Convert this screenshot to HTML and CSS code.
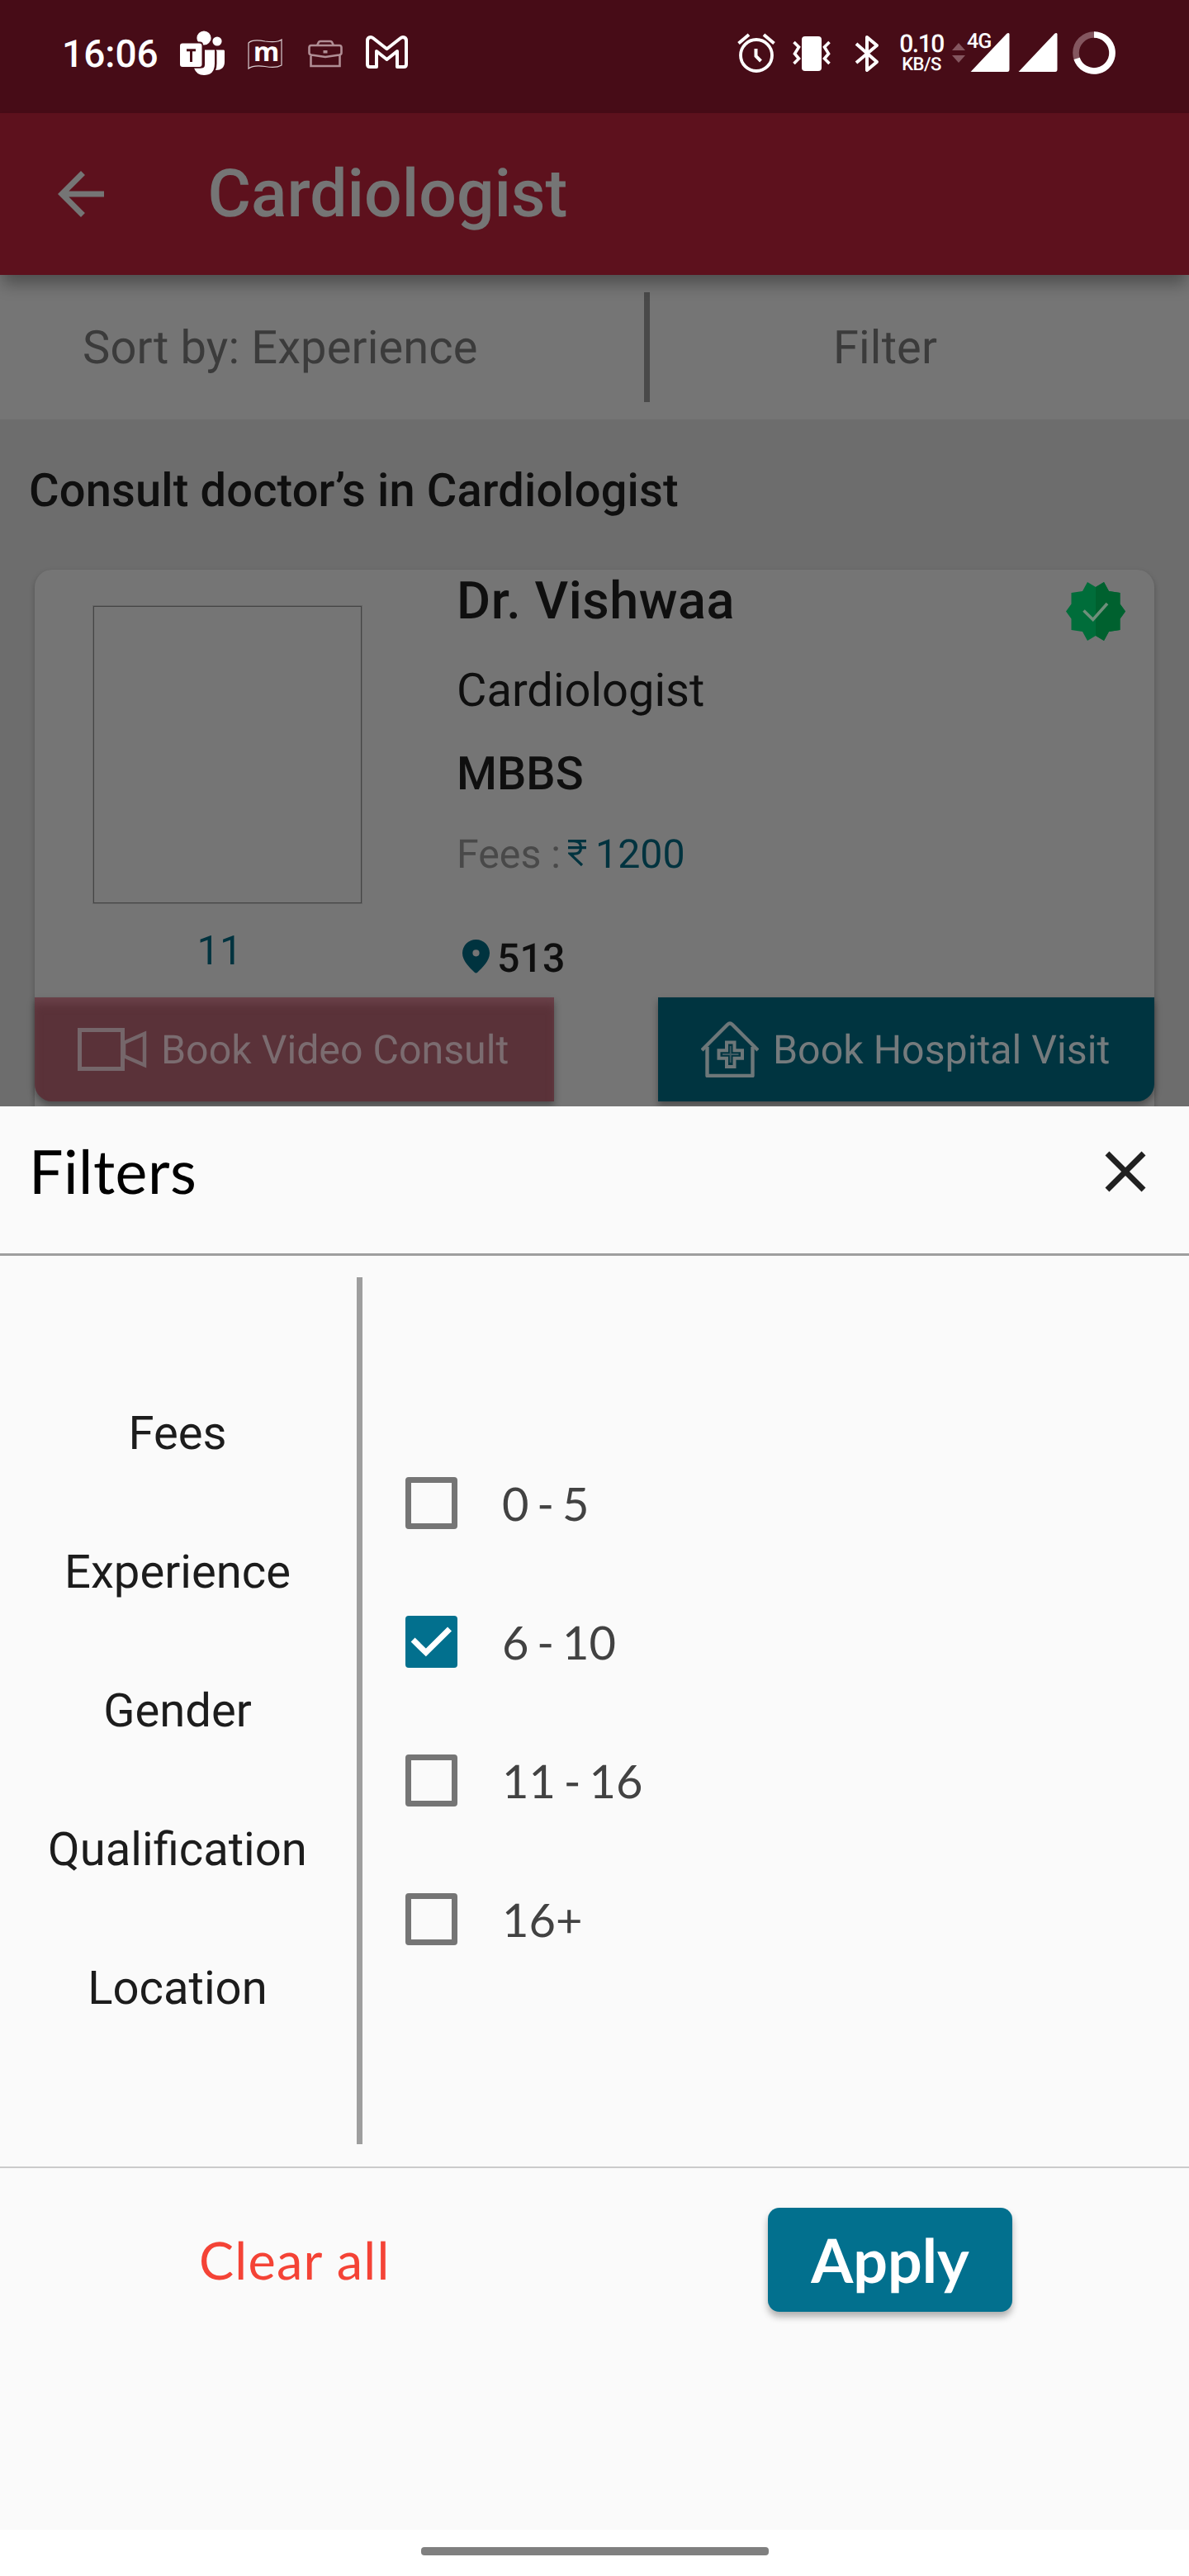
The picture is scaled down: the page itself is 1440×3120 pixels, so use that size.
FILE: index.html
```
<!DOCTYPE html>
<html lang="en">
<head>
<meta charset="utf-8">
<title>Cardiologist</title>
<link rel="stylesheet" href="styles.css">
</head>
<body>
<div class="screen">
  <header class="status">
    <span class="clock">16:06</span>
    <svg class="teams" width="56" height="56" viewBox="0 0 56 56"><g fill="#fff"><circle cx="30" cy="9" r="8.600"/><circle cx="46" cy="13" r="5.600"/><path d="M31 23.500h12V40q0 14-13 14-9 0-12-8.500h9q4 0 4-4z"/><path d="M44.500 23.500H54q1 0 1 1.500v13q0 10-11 10 1.500-3 1.500-8V25z"/><rect x="-1" y="13.500" width="30" height="32" rx="4" fill="#470c17"/><rect x="1" y="15.500" width="26.500" height="28.500" rx="3"/></g><path d="M9 23.700h11M14.500 23v15" stroke="#470c17" stroke-width="3" fill="none"/></svg>
    <svg class="flag" width="42" height="38" viewBox="0 0 42 38"><path d="M1 36V5q5-5 20-2 15 2 20-2v31q-7 4-20 1.500Q7 31.500 1 36z" fill="none" stroke="#d9cdd0" stroke-width="1.200"/></svg>
    <span class="flag-m">m</span>
    <svg class="case" width="42" height="34" viewBox="0 0 42 34"><g fill="none" stroke="#b08d94" stroke-width="2.600"><path d="M11 7l2-4q1-1 2-1h12q1 0 2 1l2 4M4 7h34q2.500 0 2.500 2.500V16q0 2-2.500 2.500L21 21 4 18.500Q1.500 18 1.500 16V9.500Q1.500 7 4 7zM3.500 19v13h35V19"/></g><rect x="18.500" y="13" width="5" height="3.500" fill="#b08d94"/></svg>
    <svg class="gmail" width="51" height="40" viewBox="0 0 51 40"><path d="M2 6.500Q2 2 6 2q1.500 0 3 1.200l16.500 13L42 3.200Q43.500 2 45 2q4 0 4 4.500V35q0 3-3 3h-8V19L25.500 29 13 19v19H5q-3 0-3-3z" fill="none" stroke="#fff" stroke-width="4" stroke-linejoin="round"/></svg>
    <div class="grow"></div>
    <svg class="alarm" width="46" height="50" viewBox="0 0 46 50"><g fill="none" stroke="#fff" stroke-width="3.800"><circle cx="23" cy="28" r="19"/><path d="M1.500 13.500L14 3M44.500 13.500L32 3M22.500 20v9l6 6" stroke-width="4"/></g></svg>
    <svg class="vibrate" width="46" height="44" viewBox="0 0 46 44"><rect x="11" y="1" width="24" height="42" rx="4" fill="#fff"/><path d="M1.500 8l6 6-5 8 5 6-6 6M44.500 8l-6 6 5 8-5 6 6 6" fill="none" stroke="#fff" stroke-width="3.600"/></svg>
    <svg class="bt" width="30" height="46" viewBox="0 0 30 46"><path d="M2 11l25 22-12 10V3l12 10L2 34" fill="none" stroke="#fff" stroke-width="4" stroke-linejoin="round"/></svg>
    <div class="rate"><span class="rate-n">0.10</span><span class="rate-u">KB/S</span></div>
    <svg class="arrows" width="16" height="24" viewBox="0 0 16 24"><path d="M8 0l8 9H0zM8 24l8-9H0z" fill="#84565f"/></svg>
    <svg class="sig" width="48" height="50" viewBox="0 0 48 50"><path d="M1 47.500L44 2q2.500-2 3.500 0v43q0 3-2.500 3H3q-3 0-2-1.500z" fill="#fff"/></svg>
    <svg class="sig2" width="48" height="50" viewBox="0 0 48 50"><path d="M1 47.500L44 2q2.500-2 3.500 0v43q0 3-2.500 3H3q-3 0-2-1.500z" fill="#fff"/></svg>
    <svg class="ring" width="52" height="52" viewBox="0 0 52 52"><g fill="none" stroke-width="7.600"><circle cx="26" cy="26" r="22" stroke="#84565f"/><path d="M26 4a22 22 0 1 1-20.900 28.800" stroke="#fff"/></g></svg>
    <span class="net">4G</span>
  </header>

  <nav class="appbar">
    <svg class="back" width="84" height="84" viewBox="0 0 24 24"><path d="M20 11H7.830l5.590-5.590L12 4l-8 8 8 8 1.410-1.410L7.830 13H20v-2z" fill="#757575"/></svg>
    <h1 class="title">Cardiologist</h1>
  </nav>

  <div class="sortbar">
    <div class="sort"><span>Sort by: Experience</span></div>
    <div class="sort-divider"></div>
    <div class="filter"><span>Filter</span></div>
  </div>

  <main class="results">
    <h2 class="heading">Consult doctor’s in Cardiologist</h2>
    <article class="card">
      <div class="card-body">
        <div class="photo-col">
          <div class="photo"></div>
          <div class="years">11</div>
        </div>
        <div class="info">
          <div class="name">Dr. Vishwaa</div>
          <div class="spec">Cardiologist</div>
          <div class="degree">MBBS</div>
          <div class="fees"><span>Fees :</span><svg class="rupee" width="22" height="32" viewBox="0 0 22 32"><path d="M0 1.600h22M0 9.600h22M0 1.600h7q8.500 0 8.500 7.800T7 17.200H2.500L17 31" fill="none" stroke="#00333f" stroke-width="3.200"/></svg><span class="amount">1200</span></div>
          <div class="place"><svg class="pin" width="33" height="41" viewBox="0 0 33 41"><path fill-rule="evenodd" d="M16.500 0A16.300 16.300 0 0 0 0 16.500C0 26 9 34 14.500 39.500q2 2 4 0C24 34 33 26 33 16.500A16.300 16.300 0 0 0 16.500 0zm0 12.200a4.100 4.100 0 1 1 0 8.200 4.100 4.100 0 0 1 0-8.200z" fill="#00333f"/></svg><span>513</span></div>
        </div>
        <svg class="badge" width="72" height="71" viewBox="0 0 72 71"><path d="M36 6L46 0l6 11 13.500 2v13.500L72 35.500l-6.500 9V58L52 60l-6 11-10-6-10 6-6-11-13.500-2V44.500L0 35.500l6.500-9V13L20 11l6-11z" fill="#006d3a"/><path d="M36 6L46 0l6 11 13.500 2v13.500L72 35.500l-6.500 9V58L52 60l-6 11-10-6z" fill="#00612f"/><path d="M21.500 34.500L32.700 45.500 50 26" fill="none" stroke="#6f8f7b" stroke-width="3.600"/></svg>
      </div>
      <div class="actions">
        <div class="btn video">
          <svg width="84" height="52" viewBox="0 0 84 52"><g fill="none" stroke="#75666a" stroke-width="5"><rect x="2.500" y="2.500" width="52" height="47"/><path d="M56 18L81 7v38L56 34z" stroke-width="4.500"/></g></svg>
          <span>Book Video Consult</span>
        </div>
        <div class="btn hospital">
          <svg width="70" height="68" viewBox="0 0 70 68"><g fill="none" stroke="#6d7779" stroke-width="4.400"><path d="M1 35L32 4q3-3 6 0l31 31"/><path d="M7.500 31v35h55V31" stroke-linejoin="round"/><path d="M31 25.500h9.500v9.800H50v9.500h-9.500V55H31V44.800h-9.500v-9.500H31z" stroke-width="4"/><path d="M35.700 30v20M26 40h19.500" stroke-width="2" stroke="#3f5a62"/></g></svg>
          <span>Book Hospital Visit</span>
        </div>
      </div>
    </article>
  </main>

  <section class="sheet">
    <div class="sheet-head">
      <h2 class="sheet-title">Filters</h2>
      <svg width="84" height="84" viewBox="0 0 24 24"><path d="M19 6.410L17.590 5 12 10.590 6.410 5 5 6.410 10.590 12 5 17.590 6.410 19 12 13.410 17.590 19 19 17.590 13.410 12z" fill="#212121"/></svg>
    </div>
    <div class="sheet-body">
      <ul class="tabs"><li>Fees</li><li>Experience</li><li>Gender</li><li>Qualification</li><li>Location</li></ul>
      <div class="divider"></div>
      <ul class="options">
        <li><i class="box"></i><span>0 - 5</span></li>
        <li><i class="box on"><svg width="63" height="63" viewBox="0 0 18 18"><path d="M2.600 8.300L7.100 12.700 15.300 4.600" fill="none" stroke="#fff" stroke-width="2"/></svg></i><span>6 - 10</span></li>
        <li><i class="box"></i><span>11 - 16</span></li>
        <li><i class="box"></i><span>16+</span></li>
      </ul>
    </div>
    <div class="sheet-foot">
      <span class="clear">Clear all</span>
      <span class="apply">Apply</span>
    </div>
  </section>
  <footer class="nav"><div class="pill"></div></footer>
</div>
</body>
</html>
```
FILE: styles.css
```
* { box-sizing: border-box; margin: 0; padding: 0; }
body { background: #fff; font-family: Roboto, sans-serif; text-rendering: geometricPrecision; }
svg { display: block; flex: none; }
ul { list-style: none; }
span { white-space: nowrap; }
.screen { width: 1440px; height: 3120px; overflow: hidden; display: flex; flex-direction: column; }

/* status bar */
.status { position: relative; height: 137px; flex: none; background: #470c17; display: flex; align-items: flex-start; color: #fff; padding: 0 89px 0 75px; }
.grow { flex: 1; }
.clock { font-size: 46px; font-weight: 500; line-height: 60px; margin-top: 36px; width: 142px; }
.teams { margin-top: 37px; }
.flag { margin: 47px 0 0 27px; }
.flag-m { position: absolute; left: 307px; top: 45px; font: 700 32px/36px "Noto Sans", sans-serif; }
.case { margin: 48px 0 0 31px; }
.gmail { margin: 43px 0 0 28px; }
.alarm { margin: 39px 21px 0 0; }
.vibrate { margin: 43px 29px 0 0; }
.bt { margin: 42px 25px 0 0; }
.rate { width: 52px; margin: 41px 11px 0 0; display: flex; flex-direction: column; align-items: center; font-weight: 500; }
.rate-n { font-size: 30px; line-height: 26px; letter-spacing: -1.500px; }
.rate-u { font-size: 22px; line-height: 24px; letter-spacing: -.500px; }
.arrows { margin: 52px 6px 0 0; }
.sig { margin: 39px 10px 0 0; }
.sig2 { margin: 39px 18px 0 0; }
.ring { margin-top: 38px; }
.net { position: absolute; left: 1171px; top: 39px; font-size: 25px; line-height: 24px; font-weight: 500; letter-spacing: -1px; }

/* app bar */
.appbar { position: relative; z-index: 1; height: 196px; flex: none; background: #5d111d; display: flex; align-items: center; padding-left: 56px; box-shadow: 0 14px 18px -3px rgba(0,0,0,.32); }
.title { margin-left: 111.500px; font-size: 80.500px; line-height: 90px; font-weight: 500; color: #757575; }

/* sort and filter row */
.sortbar { height: 175px; flex: none; background: #757575; display: flex; align-items: center; font-size: 56px; line-height: 66px; letter-spacing: .150px; color: #3b3b3b; }
.sort { width: 780px; padding-left: 100px; }
.sort-divider { width: 7px; height: 133px; background: #494949; }
.filter { flex: 1; padding-left: 222px; }

/* results */
.results { height: 832px; flex: none; overflow: hidden; background: #6d6d6d; padding: 53px 42px 0; }
.heading { margin-left: -7px; height: 129px; font-size: 56px; line-height: 66px; font-weight: 500; letter-spacing: .150px; color: #0f0f0f; white-space: nowrap; }
.card { height: 700px; border-radius: 21px; background: #757575; box-shadow: 0 3px 6px rgba(0,0,0,.25); }
.card-body { height: 518px; display: flex; }
.photo-col { width: 511px; padding: 44px 0 0 71px; }
.photo { width: 325px; height: 360px; border: 1px solid #444; outline: 1px solid #666; }
.years { width: 306px; margin-top: 29px; text-align: center; font-size: 49px; line-height: 58px; color: #00333f; }
.info { width: 738px; color: #0f0f0f; white-space: nowrap; }
.name { padding-top: 2px; font-size: 63px; line-height: 74px; font-weight: 500; letter-spacing: .550px; }
.spec { margin-top: 37px; font-size: 56px; line-height: 66px; }
.degree { margin-top: 35px; font-size: 56px; line-height: 66px; font-weight: 500; }
.fees { margin-top: 36px; font-size: 48.300px; line-height: 58px; color: #494949; display: flex; align-items: flex-start; }
.rupee { margin: 11px 11px 0 9px; }
.amount { color: #00333f; }
.place { margin: 68px 0 0 7px; font-size: 48.300px; line-height: 58px; font-weight: 500; display: flex; }
.pin { margin: 6px 9px 0 0; }
.badge { margin: 15px 0 0; }
.actions { display: flex; justify-content: space-between; font-size: 48.300px; line-height: 58px; }
.btn { height: 126px; display: flex; align-items: center; box-shadow: 0 5px 8px rgba(0,0,0,.35); }
.btn span { padding-top: 2px; }
.video { width: 629px; padding-left: 52px; gap: 17px; background: #5a3239; color: #7b6c70; border-bottom-left-radius: 21px; box-shadow: 0 5px 8px rgba(0,0,0,.35), inset 0 10px 12px -3px #6b434b; }
.hospital { width: 601px; padding-left: 52px; gap: 17px; background: #003440; color: #757b7d; border-bottom-right-radius: 21px; }

/* filter sheet */
.sheet { position: relative; z-index: 2; height: 1724px; flex: none; background: #fafafa; font-family: Lato, sans-serif; }
.sheet-head { height: 180.500px; border-bottom: 3.500px solid #9e9e9e; padding: 0 35px 0 35px; display: flex; justify-content: space-between; align-items: flex-start; }
.sheet-head svg { margin-top: 37px; }
.sheet-title { font-size: 73.500px; line-height: 88px; margin-top: 34px; font-weight: 400; letter-spacing: .500px; color: #000; }
.sheet-body { height: 1105.500px; border-bottom: 2px solid #cbcbcb; display: flex; align-items: center; }
.tabs { width: 432px; padding-right: 2px; font-family: Roboto, sans-serif; font-size: 56.200px; text-align: center; color: #1c1c1c; }
.tabs li { height: 168px; line-height: 168px; }
.divider { width: 7px; height: 1050px; background: #9e9e9e; }
.options { padding-left: 52px; font-size: 56px; word-spacing: -4.500px; color: #424242; }
.options li { height: 168px; display: flex; align-items: center; gap: 54px; }
.box { width: 63px; height: 63px; border: 7px solid #757575; border-radius: 4px; }
.on { border: 0; background: #02708e; }
.sheet-foot { display: flex; justify-content: space-between; align-items: center; height: 126px; margin-top: 48px; padding: 0 214px 0 241px; }
.clear { font-size: 63px; letter-spacing: 1.250px; color: #f44336; }
.apply { width: 296px; height: 126px; line-height: 126px; border-radius: 14px; background: #02708e; color: #fff; font-size: 73.500px; font-weight: 700; text-align: center; box-shadow: 0 6px 8px rgba(0,0,0,.3); }

/* gesture bar */
.nav { flex: 1; background: #fff; display: flex; justify-content: center; padding-top: 21px; }
.pill { width: 421px; height: 10px; border-radius: 4px; background: #808080; }
```
